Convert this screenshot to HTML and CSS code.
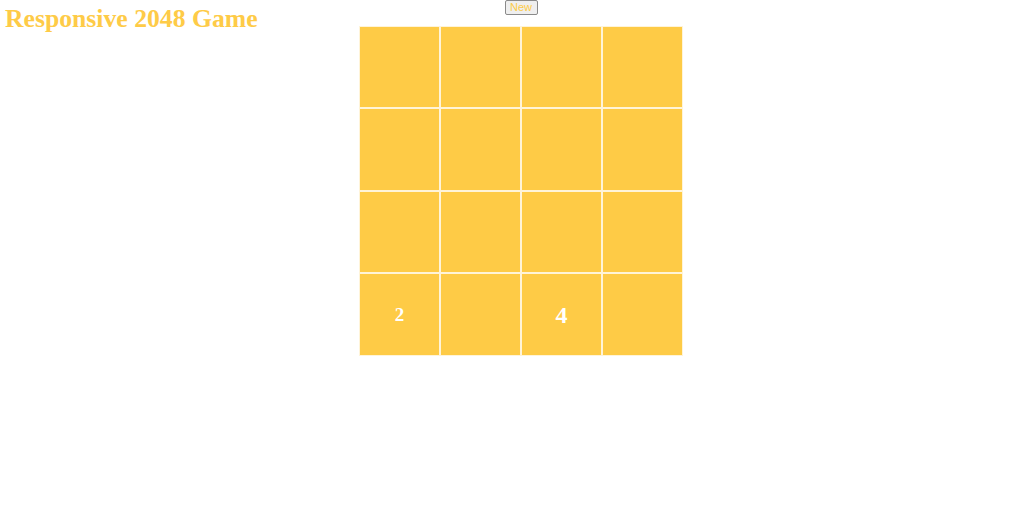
FILE: index.html
```html
<!DOCTYPE html>
<html>
<head>
<meta charset="utf-8">
<title>Responsive 2048 Game</title>
<link rel="stylesheet" href="styles.css">
</head>
<body>
<div class="page">
  <h1 class="title">Responsive 2048 Game</h1>
  <div class="game">
    <button class="new-btn">New</button>
    <div class="board">
      <div class="cell"></div><div class="cell"></div><div class="cell"></div><div class="cell"></div>
      <div class="cell"></div><div class="cell"></div><div class="cell"></div><div class="cell"></div>
      <div class="cell"></div><div class="cell"></div><div class="cell"></div><div class="cell"></div>
      <div class="cell"><span class="num num-small">2</span></div><div class="cell"></div><div class="cell"><span class="num num-tall">4</span></div><div class="cell"></div>
    </div>
  </div>
</div>
</body>
</html>
```
FILE: styles.css
```css
html, body {
  margin: 0;
  padding: 0;
  background: #ffffff;
}
.page {
  display: grid;
  grid-template-columns: 1fr auto 1fr;
  padding-left: 18px;
}
.title {
  grid-column: 1;
  grid-row: 1;
  margin: 5px 0 0 -13px;
  font-family: "Liberation Serif", "DejaVu Serif", serif;
  font-weight: bold;
  font-size: 25.7px;
  line-height: 28px;
  color: #fecb47;
  white-space: nowrap;
}
.game {
  grid-column: 2;
  grid-row: 1;
  display: flex;
  flex-direction: column;
  align-items: center;
}
.new-btn {
  margin: 0;
  height: 15px;
  width: 33px;
  padding: 0;
  font-family: "Liberation Sans", Arial, sans-serif;
  font-size: 11px;
  line-height: 13px;
  color: #fdcb47;
  background: #efefef;
  border: 1px solid #8a8a8a;
  border-radius: 2px;
}
.board {
  margin-top: 11px;
  display: grid;
  grid-template-columns: repeat(4, 81px);
  grid-template-rows: repeat(4, 82.4px);
}
.cell {
  box-sizing: border-box;
  background: #fecb46;
  border: 1px solid #fff4d8;
  display: flex;
  align-items: center;
  justify-content: center;
}
.num {
  font-family: "Liberation Serif", "DejaVu Serif", serif;
  font-weight: bold;
  color: #ffffff;
  line-height: 1;
}
.num-small {
  font-size: 19px;
}
.num-tall {
  font-size: 24px;
  position: relative;
  top: 1px;
}
```
